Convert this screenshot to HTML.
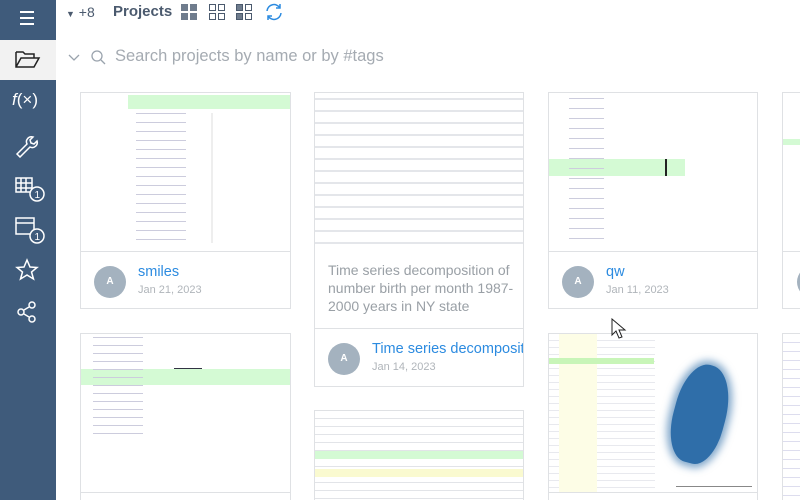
<!DOCTYPE html>
<html><head><style>
*{margin:0;padding:0;box-sizing:border-box}
html,body{width:800px;height:500px;overflow:hidden}
body{background:#fff;font-family:"Liberation Sans",sans-serif;position:relative}
.side{position:absolute;left:0;top:0;width:56px;height:500px;background:#3f5b7b}
.sel{position:absolute;left:0;top:40px;width:56px;height:40px;background:#f2f2f2}
.ic{position:absolute;left:14px}
.top{position:absolute;left:66px;top:4px;font-size:14px;color:#4b5a6e}
.card{position:absolute;border:1px solid #dfe1e4;background:#fff;overflow:hidden}
.thumb{position:absolute;left:0;top:0;right:0;background:#fff}
.foot{position:absolute;left:0;right:0;border-top:1px solid #dfe1e4}
.av{position:absolute;left:13px;width:32px;height:32px;border-radius:50%;background:#a4b2bf;color:#fff;font-size:10px;text-align:center;line-height:32px;font-weight:bold}
.nm{position:absolute;left:57px;color:#2c8be0;font-size:14.5px;white-space:nowrap}
.dt{position:absolute;left:57px;color:#b0b5ba;font-size:11px}
</style></head><body>
<div class="side"></div>
<div class="sel"></div>
<svg class="ic" style="top:8px" width="28" height="20"><g stroke="#fff" stroke-width="2"><line x1="6" y1="4" x2="20" y2="4"/><line x1="6" y1="10" x2="20" y2="10"/><line x1="6" y1="16" x2="20" y2="16"/></g></svg>
<svg class="ic" style="top:48px" width="28" height="24" fill="none" stroke="#222" stroke-width="1.5"><path d="M2 4h7l2 2h9v4M2 4v15h18l5-9H7L2 19"/></svg>
<div style="position:absolute;left:12px;top:90px;color:#fff;font-size:17px;font-style:italic">f<span style="font-style:normal">(×)</span></div>
<svg class="ic" style="top:132px" width="28" height="26" fill="none" stroke="#fff" stroke-width="1.5"><path d="M3 22l10-10a5 5 0 0 1 6-7l-3 3 1 3 3 1 3-3a5 5 0 0 1-7 6L6 25z"/></svg>
<svg class="ic" style="top:174px" width="34" height="30" fill="none" stroke="#fff" stroke-width="1.5"><rect x="2" y="4" width="16" height="14"/><path d="M2 9h16M2 14h16M7 4v14M12 4v14"/><circle cx="23" cy="20" r="7" fill="#3f5b7b"/><text x="20.5" y="24" fill="#fff" stroke="none" font-size="10" font-family="Liberation Sans">1</text></svg>
<svg class="ic" style="top:214px" width="34" height="32" fill="none" stroke="#fff" stroke-width="1.5"><rect x="2" y="4" width="18" height="16"/><path d="M2 9h18"/><circle cx="23" cy="22" r="7" fill="#3f5b7b"/><text x="20.5" y="26" fill="#fff" stroke="none" font-size="10" font-family="Liberation Sans">1</text></svg>
<svg class="ic" style="top:258px" width="28" height="26" fill="none" stroke="#fff" stroke-width="1.5"><path d="M13 2l3 7 7 .5-5.5 4.5 2 7-6.5-4-6.5 4 2-7L3 9.5l7-.5z"/></svg>
<svg class="ic" style="top:298px" width="28" height="28" fill="none" stroke="#fff" stroke-width="1.5"><circle cx="7" cy="14" r="3"/><circle cx="18" cy="7" r="3"/><circle cx="18" cy="21" r="3"/><path d="M10 12l5-3M10 16l5 3"/></svg>

<div class="top"><span style="font-size:9px">▼</span> +8</div>
<div style="position:absolute;left:113px;top:3px;font-size:15px;font-weight:bold;color:#4b5a6e">Projects</div>
<svg style="position:absolute;left:180px;top:3px" width="110" height="18"><g fill="#6f7c8d"><rect x="1" y="1" width="7" height="7"/><rect x="10" y="1" width="7" height="7"/><rect x="1" y="10" width="7" height="7"/><rect x="10" y="10" width="7" height="7"/></g><g fill="none" stroke="#4b5a6e"><rect x="29.5" y="1.5" width="6" height="6"/><rect x="38.5" y="1.5" width="6" height="6"/><rect x="29.5" y="10.5" width="6" height="6"/><rect x="38.5" y="10.5" width="6" height="6"/><rect x="56.5" y="1.5" width="6" height="6"/><rect x="65.5" y="1.5" width="6" height="6"/><rect x="56.5" y="10.5" width="6" height="6"/><rect x="65.5" y="10.5" width="6" height="6"/></g><g fill="#6f7c8d"><rect x="57" y="2" width="5" height="5"/><rect x="57" y="11" width="5" height="5"/></g><path d="M87 8a7 7 0 0 1 13-3M101 10a7 7 0 0 1-13 3M100 1v4h-4M88 17v-4h4" fill="none" stroke="#2c8be0" stroke-width="1.5"/></svg>
<svg style="position:absolute;left:68px;top:50px" width="44" height="16" fill="none" stroke="#9aa3ad" stroke-width="1.3"><path d="M1 5l5 5 5-5"/><circle cx="29" cy="6" r="5"/><path d="M33 10l4 4"/></svg>
<div style="position:absolute;left:115px;top:47px;font-size:16.5px;color:#a5abb2">Search projects by name or by #tags</div>

<!-- card1 -->
<div class="card" style="left:80px;top:92px;width:211px;height:217px">
 <div class="thumb" style="height:158px"><div style="position:absolute;left:47px;top:2px;right:0;height:14px;background:#d4fad4"></div><div style="position:absolute;left:55px;top:20px;width:50px;height:130px;background:repeating-linear-gradient(180deg,#ccd 0 1px,transparent 1px 9px)"></div><div style="position:absolute;left:130px;top:20px;width:2px;height:130px;background:#eee"></div></div>
 <div class="foot" style="top:158px;height:60px"><div class="av" style="top:14px">A</div><div class="nm" style="top:12px">smiles</div><div class="dt" style="top:32px">Jan 21, 2023</div></div>
</div>
<!-- card2 -->
<div class="card" style="left:314px;top:92px;width:210px;height:295px">
 <div class="thumb" style="height:158px;background:repeating-linear-gradient(180deg,transparent 0 5px,#e4e6ea 5px 7px,transparent 7px 12px),#fff"></div>
 <div style="position:absolute;left:13px;top:168px;width:196px;font-size:14px;line-height:18px;color:#9aa0a6">Time series decomposition of number birth per month 1987-2000 years in NY state</div>
 <div class="foot" style="top:235px;height:60px"><div class="av" style="top:14px">A</div><div class="nm" style="top:12px">Time series decomposition</div><div class="dt" style="top:32px">Jan 14, 2023</div></div>
</div>
<!-- card3 -->
<div class="card" style="left:548px;top:92px;width:210px;height:217px">
 <div class="thumb" style="height:158px"><div style="position:absolute;left:0;top:66px;width:136px;height:17px;background:#d4fad4"></div><div style="position:absolute;left:116px;top:66px;width:2px;height:17px;background:#222"></div><div style="position:absolute;left:20px;top:5px;width:35px;height:150px;background:repeating-linear-gradient(180deg,#ccd 0 1px,transparent 1px 10px)"></div></div>
 <div class="foot" style="top:158px;height:60px"><div class="av" style="top:14px">A</div><div class="nm" style="top:12px">qw</div><div class="dt" style="top:32px">Jan 11, 2023</div></div>
</div>
<div class="card" style="left:782px;top:92px;width:30px;height:217px"><div style="position:absolute;left:0;top:46px;width:30px;height:6px;background:#d4fad4"></div><div class="foot" style="top:158px;height:60px"><div class="av" style="top:14px;left:14px">A</div></div></div>
<!-- row2 -->
<div class="card" style="left:80px;top:333px;width:211px;height:180px"><div class="thumb" style="height:158px"><div style="position:absolute;left:0;top:35px;right:0;height:16px;background:#d4fad4"></div><div style="position:absolute;left:93px;top:34px;width:28px;height:1px;background:#334"></div><div style="position:absolute;left:12px;top:3px;width:50px;height:100px;background:repeating-linear-gradient(180deg,#ccd 0 1px,transparent 1px 8px)"></div></div><div class="foot" style="top:158px"></div></div>
<div class="card" style="left:314px;top:410px;width:210px;height:100px"><div class="thumb" style="height:100px;background:repeating-linear-gradient(180deg,transparent 0 7px,#e2e4e8 7px 8px),#fff"><div style="position:absolute;left:0;top:40px;right:0;height:8px;background:#d4fad4"></div><div style="position:absolute;left:0;top:58px;right:0;height:8px;background:#fafad0"></div></div></div>
<div class="card" style="left:548px;top:333px;width:210px;height:180px"><div class="thumb" style="height:158px;background:repeating-linear-gradient(180deg,transparent 0 6px,#e8e9ee 6px 7px),#fff"><div style="position:absolute;left:10px;top:0;width:38px;height:158px;background:#fdfde6"></div><div style="position:absolute;left:0;top:24px;width:105px;height:6px;background:#c8f5b8"></div><div style="position:absolute;left:106px;top:0;right:0;height:158px;background:#fff"></div><div style="position:absolute;left:125px;top:30px;width:52px;height:100px;border-radius:45% 50% 40% 45%;background:#2f6ea9;transform:rotate(15deg);box-shadow:0 0 8px 4px rgba(47,110,169,.6)"></div><div style="position:absolute;left:127px;top:152px;width:76px;height:1px;background:#888"></div></div><div class="foot" style="top:158px"></div></div>
<div class="card" style="left:782px;top:333px;width:30px;height:180px;background:repeating-linear-gradient(180deg,transparent 0 8px,#dde 8px 9px),#fff"></div>
<svg style="position:absolute;left:611px;top:318px" width="16" height="22"><path d="M1 1v16l4-4 3 7 3-1-3-7h6z" fill="#fff" stroke="#222"/></svg>
</body></html>
